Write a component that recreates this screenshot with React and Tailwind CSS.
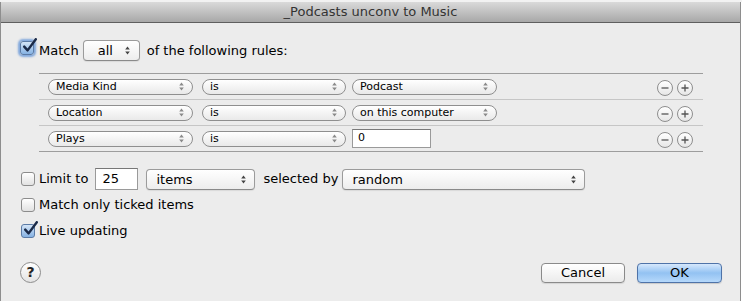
import React from 'react'

const Arrows = ({ className }) => (
  <svg width="5" height="9" viewBox="0 0 5 9" className={className}>
    <path d="M2.5 0.6L4.8 3.6H0.2Z M2.5 8.4L0.2 5.4H4.8Z" fill="currentColor" />
  </svg>
)

const PillSelect = ({ label, className }) => (
  <div className={`flex h-[16px] items-center justify-between rounded-full border border-[#8f8f8f] bg-linear-to-b from-white to-[#e9e9e9] pl-[7px] pr-[8px] text-[11px] leading-none ${className}`}>
    <span>{label}</span>
    <Arrows className="text-[#8a8a8a]" />
  </div>
)

const SquareSelect = ({ label, className }) => (
  <div className={`flex h-[21px] items-center justify-between rounded-[4px] border border-[#9b9b9b] border-b-[#8a8a8a] bg-linear-to-b from-white to-[#ededed] pl-[9px] pr-[8px] text-[13px] leading-none shadow-[0_1px_1px_rgba(0,0,0,0.08)] ${className}`}>
    <span>{label}</span>
    <Arrows className="text-[#444]" />
  </div>
)

const Checkbox = ({ checked, focus, className = '' }) => (
  <div
    className={`relative h-[14px] w-[14px] shrink-0 rounded-[3px] border ${
      checked
        ? 'border-[#5b7ba6] bg-linear-to-b from-[#d4e5f7] to-[#86b2e3]'
        : 'border-[#8c8c8c] bg-linear-to-b from-white to-[#e2e2e2]'
    } ${focus ? 'shadow-[0_0_2px_2px_rgba(95,145,215,0.75)]' : ''} ${className}`}
  >
    {checked && (
      <svg viewBox="0 0 16 16" className="absolute -top-[4px] left-[1px] h-[16px] w-[16px]">
        <path d="M2.2 8.6L5.6 12.4L13.8 1.2" fill="none" stroke="#1b2a48" strokeWidth="2.4" strokeLinecap="round" strokeLinejoin="round" />
      </svg>
    )}
  </div>
)

const RoundBtn = ({ plus }) => (
  <div className="flex h-[16px] w-[16px] items-center justify-center rounded-full border border-[#8e8e8e] bg-linear-to-b from-white to-[#e6e6e6]">
    <svg viewBox="0 0 10 10" className="h-[10px] w-[10px]">
      <path d={plus ? 'M1.5 5H8.5M5 1.5V8.5' : 'M1.5 5H8.5'} stroke="#555" strokeWidth="1.3" />
    </svg>
  </div>
)

const rules = [
  { field: 'Media Kind', op: 'is', value: 'Podcast' },
  { field: 'Location', op: 'is', value: 'on this computer' },
  { field: 'Plays', op: 'is', value: '0', text: true },
]

export default function App() {
  return (
    <div className="h-[301px] w-[742px] overflow-hidden bg-white font-[family-name:DejaVu_Sans,sans-serif] text-black">
      <div className="h-[2px] bg-[#f2f2f2]" />
      <div className="flex h-[299px] w-[741px] flex-col border-x border-[#8e8e8e] bg-[#ececec]">
        <div className="flex h-[21px] items-center justify-center border-b border-[#5f5f5f] bg-linear-to-b from-[#dadada] to-[#a8a8a8] text-[13px] text-[#333]">
          _Podcasts unconv to Music
        </div>

        <div className="mt-[17px] flex h-[21px] items-center pl-[19px] text-[13px]">
          <Checkbox checked focus className="mb-[6px]" />
          <span className="ml-[5px]">Match</span>
          <SquareSelect label="all" className="ml-[4px] w-[57px] !pl-[14px] !pr-[9px]" />
          <span className="ml-[7px]">of the following rules:</span>
        </div>

        <div className="ml-[38px] mt-[12px] w-[664px] border-y border-[#9d9d9d]">
          {rules.map((r, i) => (
            <div
              key={r.field}
              className={`flex items-center pl-[9px] pr-[10px] ${i < rules.length - 1 ? 'h-[26px] border-b border-[#c6c6c6]' : 'h-[25px]'}`}
            >
              <PillSelect label={r.field} className="w-[145px]" />
              <PillSelect label={r.op} className="ml-[9px] w-[144px]" />
              {r.text ? (
                <div className="ml-[6px] flex h-[19px] w-[79px] items-center border border-[#9a9a9a] border-t-[#7a7a7a] bg-white pl-[5px] text-[11px]">
                  {r.value}
                </div>
              ) : (
                <PillSelect label={r.value} className="ml-[6px] w-[145px]" />
              )}
              <div className="ml-auto mt-[3px] flex gap-[4px]">
                <RoundBtn />
                <RoundBtn plus />
              </div>
            </div>
          ))}
        </div>

        <div className="mt-[16px] flex h-[22px] items-center pl-[20px] text-[13px]">
          <Checkbox />
          <span className="ml-[4px]">Limit to</span>
          <div className="ml-[7px] flex h-[22px] w-[43px] items-center border border-[#9a9a9a] border-t-[#777] bg-white pl-[6px]">25</div>
          <SquareSelect label="items" className="ml-[8px] w-[109px]" />
          <span className="ml-[8px]">selected by</span>
          <SquareSelect label="random" className="ml-[4px] w-[243px]" />
        </div>

        <div className="mt-[4px] flex h-[22px] items-center pl-[20px] text-[13px]">
          <Checkbox />
          <span className="ml-[4px]">Match only ticked items</span>
        </div>

        <div className="mt-[4px] flex h-[22px] items-center pl-[20px] text-[13px]">
          <Checkbox checked />
          <span className="ml-[4px]">Live updating</span>
        </div>

        <div className="mt-[20px] flex h-[21px] items-center pl-[19px] pr-[18px] text-[13px]">
          <div className="flex h-[21px] w-[21px] items-center justify-center rounded-full border border-[#8c8c8c] bg-linear-to-b from-white to-[#e3e3e3] text-[14px] font-bold text-[#222]">
            ?
          </div>
          <div className="ml-auto flex h-[20px] w-[84px] items-center justify-center rounded-[4px] border border-[#8a8a8a] bg-linear-to-b from-white to-[#ebebeb] shadow-[0_1px_1px_rgba(0,0,0,0.1)]">
            Cancel
          </div>
          <div className="ml-[12px] flex h-[20px] w-[85px] items-center justify-center rounded-[4px] border border-[#4f73a8] bg-linear-to-b from-[#d6e8fc] via-[#93c2f2] to-[#b5d8fb] shadow-[0_1px_1px_rgba(0,0,0,0.15)]">
            OK
          </div>
        </div>
      </div>
    </div>
  )
}
